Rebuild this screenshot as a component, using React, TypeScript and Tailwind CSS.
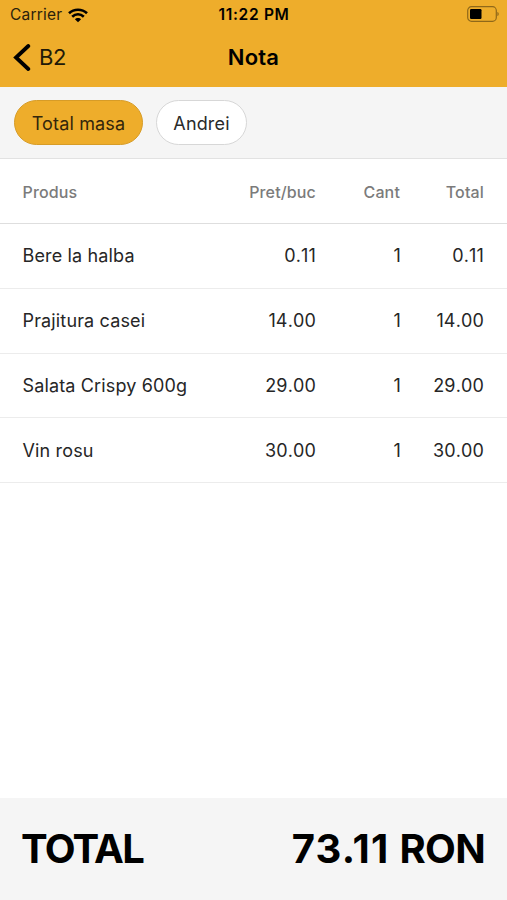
interface Product {
  name: string;
  price: string;
  qty: number;
  total: string;
}

const products: Product[] = [
  { name: 'Bere la halba', price: '0.11', qty: 1, total: '0.11' },
  { name: 'Prajitura casei', price: '14.00', qty: 1, total: '14.00' },
  { name: 'Salata Crispy 600g', price: '29.00', qty: 1, total: '29.00' },
  { name: 'Vin rosu', price: '30.00', qty: 1, total: '30.00' },
];

function StatusBar() {
  return (
    <div className="grid h-[30px] grid-cols-3 items-center pl-[10px] pr-[8px] text-[15.5px]">
      <div className="flex items-center gap-[6px] text-[#2b210c]">
        <span className="tracking-[0.2px]">Carrier</span>
        <svg width="20" height="15" viewBox="0 0 20 15" fill="none" stroke="black" strokeWidth="2.6">
          <path d="M1 5.3C3.4 3 6.500 1.700 10 1.700s6.600 1.300 9 3.600" />
          <path d="M4.200 8.700C5.800 7.200 7.800 6.300 10 6.300s4.200.900 5.800 2.400" />
          <path d="M10 10c-1.300 0-2.300.500-3.100 1.200L10 14.300l3.100-3.100C12.300 10.500 11.300 10 10 10z" fill="black" stroke="none" />
        </svg>
      </div>
      <span className="-ml-px text-center font-semibold tracking-[0.7px]">11:22 PM</span>
      <svg className="mb-[2px] justify-self-end" width="32" height="16" viewBox="0 0 32 16">
        <rect x="0.7" y="0.7" width="28.600" height="14.600" rx="3.800" fill="none" stroke="black" strokeOpacity="0.4" strokeWidth="1.2" />
        <rect x="3" y="3" width="11.500" height="10" rx="1.200" />
        <path d="M30.400 6c.900.400 1.300 1.100 1.300 2s-.4 1.600-1.300 2z" fillOpacity="0.4" />
      </svg>
    </div>
  );
}

export default function App() {
  return (
    <div className="flex h-screen flex-col bg-white font-['Inter',sans-serif] text-black">
      {/* Header */}
      <header className="h-[87px] shrink-0 bg-[#eead2b]">
        <StatusBar />
        <div className="grid h-[55px] grid-cols-3 items-center px-[13px]">
          <button className="flex items-center gap-2 text-[22px] tracking-[-0.3px] text-[#211908]">
            <svg width="18" height="28" viewBox="0 0 18 28" fill="none" stroke="black" strokeWidth="3.8" strokeLinecap="round">
              <path d="M15.300 2L3 13.500l12.300 11.500" />
            </svg>
            B2
          </button>
          <h1 className="text-center text-[22px] font-semibold tracking-[0.2px]">Nota</h1>
        </div>
      </header>

      {/* Filter chips */}
      <div className="flex h-[72px] shrink-0 items-center gap-[13px] border-b border-[#e2e2e2] bg-[#f5f5f5] px-[14px] text-[18px] tracking-[0.15px]">
        <button className="h-[45px] w-[129px] rounded-full border border-[#d79c27] bg-[#eead2b] pt-px text-[#33260b]">Total masa</button>
        <button className="h-[45px] w-[91px] rounded-full border border-[#d7d7d7] bg-white pt-px text-[#2a2a2a]">Andrei</button>
      </div>

      <table className="w-full table-fixed text-right text-[18px] text-[#262626]">
        <colgroup>
          <col />
          <col className="w-[116px]" />
          <col className="w-[85px]" />
          <col className="w-[106px]" />
        </colgroup>
        <thead>
          <tr className="h-[64.5px] border-b border-[#dedede] text-[16px] tracking-[0.15px] text-[#7b7b7b]">
            <th className="pt-[2px] pl-[22.5px] text-left font-medium">Produs</th>
            <th className="pt-[2px] font-medium">Pret/buc</th>
            <th className="pt-[2px] pr-px font-medium">Cant</th>
            <th className="pt-[2px] pr-[23px] font-medium">Total</th>
          </tr>
        </thead>
        <tbody>
          {products.map((product) => (
            <tr key={product.name} className="h-[64.75px] border-b border-[#ececec] tracking-[0.15px]">
              <td className="pl-[22.5px] text-left">{product.name}</td>
              <td className="[font-kerning:none]">{product.price}</td>
              <td>{product.qty}</td>
              <td className="pr-[23px] [font-kerning:none]">{product.total}</td>
            </tr>
          ))}
        </tbody>
      </table>

      {/* Bill total */}
      <footer className="mt-auto flex h-[102.5px] shrink-0 items-center justify-between bg-[#f5f5f5] pr-[22px] pl-[21px] pt-px text-[40px] font-bold">
        <span className="tracking-[-1.7px]">TOTAL</span>
        <span className="flex gap-[10px]">
          <span className="tracking-[1.2px]">73.11</span>
          <span className="tracking-[-0.7px]">RON</span>
        </span>
      </footer>
    </div>
  );
}
